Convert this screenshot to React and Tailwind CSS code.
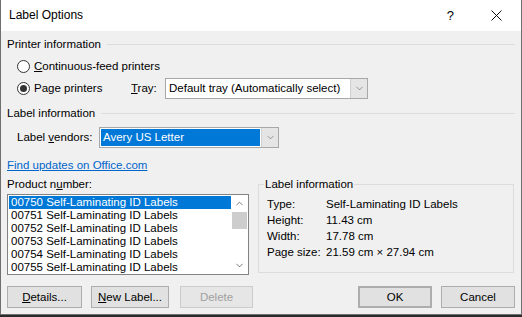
import { ChevronDown, ChevronUp } from 'lucide-react';

const font = { fontFamily: '"Segoe UI", "Liberation Sans", Arial, sans-serif' };

function Radio({ checked }) {
  return (
    <span className="w-[13px] h-[13px] rounded-full border border-[#333333] bg-white flex items-center justify-center shrink-0">
      {checked && <span className="w-[7px] h-[7px] rounded-full bg-[#333333]" />}
    </span>
  );
}

function Header({ children }) {
  return (
    <div className="flex items-center h-[15px]">
      <span className="whitespace-nowrap">{children}</span>
      <span className="flex-1 h-px bg-[#dcdcdc] ml-[6px]" />
    </div>
  );
}

function Arrow() {
  return (
    <span className="w-[17px] self-stretch bg-[#e5e5e5] border-l border-[#d0d0d0] flex items-center justify-center">
      <ChevronDown size={11} strokeWidth={1.3} className="text-[#606060]" />
    </span>
  );
}

function Btn({ children, className = '', disabled }) {
  return (
    <button
      type="button"
      className={
        'h-[22px] border flex items-center justify-center ' +
        (disabled
          ? 'bg-[#e6e6e6] border-[#cccccc] text-[#a0a0a0] '
          : 'bg-[#e1e1e1] border-[#adadad] text-black ') +
        className
      }
    >
      {children}
    </button>
  );
}

const items = ['00750', '00751', '00752', '00753', '00754', '00755'];

export default function App() {
  return (
    <div className="w-[522px] h-[317px] bg-[#2b2b2b] text-[11.5px] leading-[15px] text-black" style={font}>
      <div className="h-[315px] border-x border-b border-[#6f6f6f] bg-[#f0f0f0] flex flex-col">
        <div className="h-[31px] bg-white flex items-center pl-[8px] shrink-0 text-[12px]">
          <span>Label Options</span>
          <span className="ml-auto mr-[37px] text-[13px]">?</span>
          <svg width="11" height="11" viewBox="0 0 11 11" className="mr-[19px]">
            <path d="M0.5 0.5 L10.5 10.5 M10.5 0.5 L0.5 10.5" stroke="#111" strokeWidth="1" />
          </svg>
        </div>

        <div className="pl-[6px] pr-[6px] flex flex-col">
          <div className="mt-[6px]">
            <Header>Printer information</Header>
          </div>
          <div className="mt-[3px] h-[22px] flex items-center pl-[10px] gap-[4px]">
            <Radio />
            <span>
              <span className="underline">C</span>ontinuous-feed printers
            </span>
          </div>
          <div className="h-[22px] flex items-center pl-[10px]">
            <Radio checked />
            <span className="ml-[4px] w-[97px]">
              Pa<span className="underline">g</span>e printers
            </span>
            <span className="w-[34px]">
              <span className="underline">T</span>ray:
            </span>
            <div className="w-[203px] h-[21px] border border-[#a8a8a8] bg-white flex items-stretch">
              <span className="flex-1 pl-[3px] flex items-center">Default tray (Automatically select)</span>
              <Arrow />
            </div>
          </div>

          <div className="mt-[7px]">
            <Header>Label information</Header>
          </div>
          <div className="mt-[5px] h-[22px] flex items-center pl-[10px]">
            <span className="w-[82px]">
              Label <span className="underline">v</span>endors:
            </span>
            <div className="w-[180px] h-[21px] border border-[#a8a8a8] bg-white flex items-stretch">
              <span className="flex-1 m-[1px] bg-[#0078d7] text-white pl-[2px] flex items-center">Avery US Letter</span>
              <Arrow />
            </div>
          </div>

          <div className="mt-[10px] h-[15px] text-[#0066cc] underline">Find updates on Office.com</div>

          <div className="mt-[4px] flex">
            <div className="w-[242px] flex flex-col">
              <span className="h-[15px]">
                Product n<span className="underline">u</span>mber:
              </span>
              <div className="mt-[2px] h-[81px] border border-[#828282] bg-white flex">
                <div className="flex-1 pt-[1px] pl-[1px]">
                  {items.map((n, i) => (
                    <div
                      key={n}
                      className={
                        'h-[13px] leading-[13px] pl-[2px] ' + (i === 0 ? 'bg-[#0078d7] text-white' : '')
                      }
                    >
                      {n} Self-Laminating ID Labels
                    </div>
                  ))}
                </div>
                <div className="w-[17px] flex flex-col items-center">
                  <ChevronUp size={11} strokeWidth={1.8} className="text-[#606060] mt-[3px]" />
                  <span className="w-[15px] h-[17px] bg-[#cdcdcd] mt-[3px]" />
                  <ChevronDown size={11} strokeWidth={1.8} className="text-[#606060] mt-auto mb-[3px]" />
                </div>
              </div>
            </div>

            <div className="relative ml-[9px] mt-[7px] w-[256px] h-[89px] border border-[#dcdcdc] pl-[8px] pt-[11px]">
              <span className="absolute -top-[8px] left-[5px] px-[1px] bg-[#f0f0f0]">Label information</span>
              {[
                ['Type:', 'Self-Laminating ID Labels'],
                ['Height:', '11.43 cm'],
                ['Width:', '17.78 cm'],
                ['Page size:', '21.59 cm × 27.94 cm'],
              ].map(([k, v]) => (
                <div key={k} className="h-[16px] flex items-center">
                  <span className="w-[59px]">{k}</span>
                  <span>{v}</span>
                </div>
              ))}
            </div>
          </div>

          <div className="mt-[11px] flex">
            <Btn className="w-[75px]">
              <span>
                <span className="underline">D</span>etails...
              </span>
            </Btn>
            <Btn className="w-[78px] ml-[9px]">
              <span>
                <span className="underline">N</span>ew Label...
              </span>
            </Btn>
            <Btn className="w-[73px] ml-[11px]" disabled>
              Delete
            </Btn>
            <Btn className="w-[74px] ml-auto border-[#0078d7] border-2">OK</Btn>
            <Btn className="w-[74px] ml-[9px]">Cancel</Btn>
          </div>
        </div>
      </div>
    </div>
  );
}
